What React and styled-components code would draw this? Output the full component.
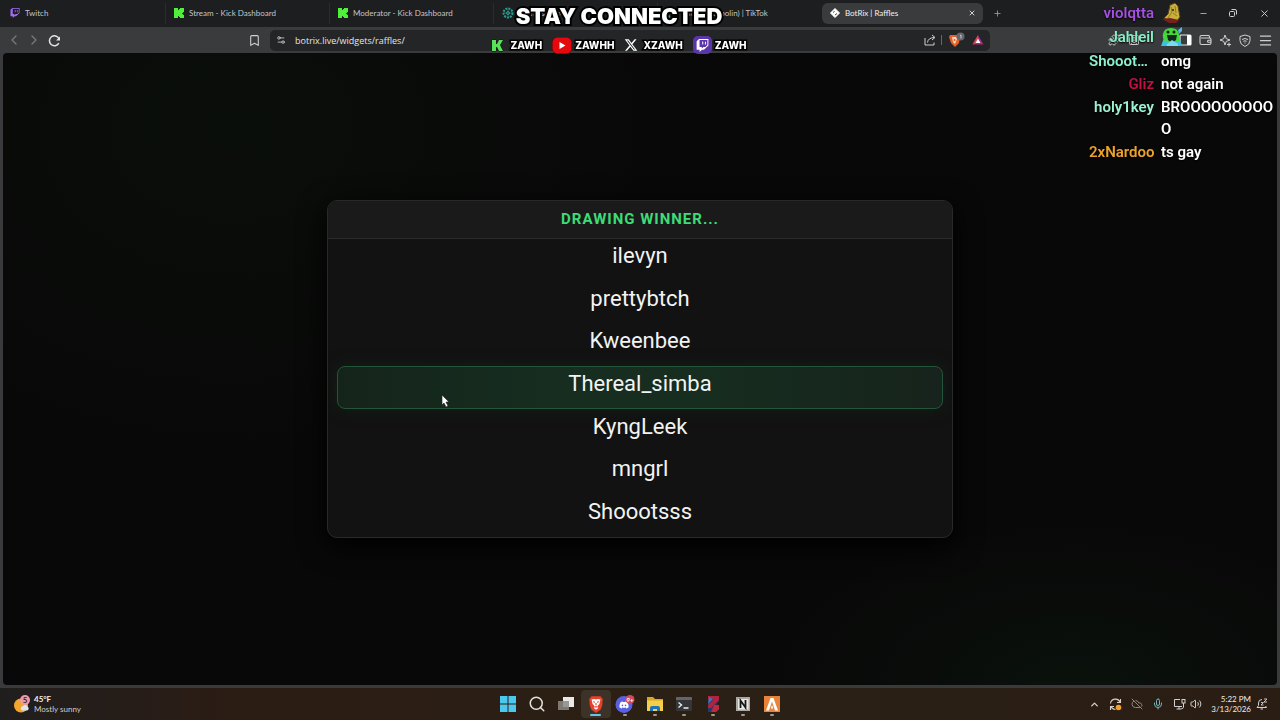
import styled, { createGlobalStyle, css } from "styled-components";
import {
  Bookmark,
  ChevronLeft,
  ChevronRight,
  ChevronUp,
  CloudOff,
  Menu,
  Mic,
  Minus,
  Plus,
  Puzzle,
  Search,
  Settings2,
  SquareUser,
  Volume2,
  X,
} from "lucide-react";
import { FaDiscord, FaTwitch, FaXTwitter } from "react-icons/fa6";

const GlobalStyle = createGlobalStyle`
  * {
    box-sizing: border-box;
  }

  body {
    margin: 0;
    background: #0a0a0a;
    font-family: Lato, "Open Sans", sans-serif;
    color: #e6e6e6;
  }

  button, input {
    font: inherit;
    color: inherit;
    background: none;
    border: 0;
    padding: 0;
    margin: 0;
  }

  svg {
    display: block;
    flex: none;
  }
`;

const Desktop = styled.div`
  display: flex;
  flex-direction: column;
  min-height: 100vh;
  background: #3a3a3c;
  overflow: hidden;
`;

const TabStrip = styled.div`
  display: flex;
  align-items: center;
  height: 27px;
  padding: 0 0 1px 2px;
  background: #1d1e20;
`;

const Tab = styled.div`
  display: flex;
  align-items: center;
  flex: 0 1 164px;
  min-width: 0;
  height: 21px;
  padding: 0 7px 0 8px;
  border-right: 1px solid ${(props) => (props.$last ? "transparent" : "#2b2c2e")};

  ${(props) =>
    props.$active &&
    css`
      flex-basis: 161px;
      border: 0;
      border-radius: 6px;
      background: #3a3b3d;
    `}
`;

const TabButton = styled.button`
  display: flex;
  align-items: center;
  gap: 5px;
  flex: 1;
  min-width: 0;
  font-size: 8px;
  line-height: 12px;
  color: ${(props) => (props.$active ? "#f2f2f2" : "#c4c5c7")};
  white-space: nowrap;
`;

const IconButton = styled.button`
  display: flex;
  align-items: center;
  justify-content: center;
  width: ${(props) => props.$width || 20}px;
  height: 20px;
  color: ${(props) => props.$color || "#d0d0d2"};
`;

const WindowControls = styled.div`
  display: flex;
  margin-left: auto;
`;

const Toolbar = styled.div`
  display: flex;
  align-items: center;
  height: 26px;
  padding: 0 5px 0 4px;
  background: #3a3b3d;
`;

const ToolbarStart = styled.div`
  flex: 1 1 266px;
  display: flex;
  padding-right: 6px;
`;

const ToolbarEnd = styled.div`
  flex: 1 1 285px;
  display: flex;
  justify-content: flex-end;
  gap: 31px;
`;

const ToolGroup = styled.div`
  display: flex;
`;

const BookmarkSlot = styled.div`
  margin-left: auto;
`;

const AddressBar = styled.div`
  display: flex;
  align-items: center;
  flex: 0 1 720px;
  height: 21px;
  padding: 0 4px 0 1px;
  border-radius: 5px;
  background: #242527;
`;

const AddressInput = styled.input`
  flex: 1;
  min-width: 0;
  padding-left: 4px;
  font-family: "Open Sans", sans-serif;
  font-size: 9px;
  outline: none;
`;

const Divider = styled.span`
  width: 1px;
  height: 10px;
  background: #65666a;
`;

const Viewport = styled.main`
  flex: 1;
  display: flex;
  align-items: center;
  justify-content: center;
  margin: 0 3px 3px;
  padding: 20px;
  border-radius: 4px;
  background:
    radial-gradient(ellipse 420px 320px at 18% 12%, #0a0e0a 0%, transparent 100%),
    radial-gradient(ellipse 300px 160px at 84% 100%, #0a110b 0%, transparent 100%),
    #080808;
`;

const Card = styled.section`
  width: 100%;
  max-width: 626px;
  border: 1px solid #29292a;
  border-radius: 10px;
  background: #121212;
  box-shadow: 0 8px 28px #000000;
  overflow: hidden;
`;

const CardTitle = styled.h1`
  margin: 0;
  padding: 8px 0 9px;
  border-bottom: 1px solid #2c2b2c;
  background: #1a1a1a;
  font-family: Roboto, sans-serif;
  font-size: 15px;
  font-weight: 700;
  line-height: 20px;
  letter-spacing: 1px;
  text-align: center;
  text-transform: uppercase;
  color: #3ddc76;
`;

const Drum = styled.div`
  position: relative;
  height: 298px;
`;

const Marker = styled.div`
  position: absolute;
  left: 9px;
  right: 9px;
  top: 127px;
  height: 43px;
  border: 1px solid #24553a;
  border-radius: 8px;
  background: linear-gradient(90deg, #15241b, #162d1f 35%, #162d1f 60%, #17231c);
  box-shadow: 0 0 16px #10301c80;
`;

const Reel = styled.ol`
  position: absolute;
  inset: -4px 0 4px;
  display: grid;
  grid-template-rows: repeat(7, 1fr);
  margin: 0;
  padding: 0;
  list-style: none;
`;

const Entrant = styled.li`
  display: flex;
  align-items: center;
  justify-content: center;
  font-family: Roboto, sans-serif;
  font-size: 22px;
  line-height: 28px;
  color: #f2f3f2;
`;

const Taskbar = styled.footer`
  display: grid;
  grid-template-columns: 1fr 294px 1fr;
  align-items: center;
  height: 32px;
  background: linear-gradient(90deg, #201e1d, #2b1c14 18%, #2b2014 50%, #2a1e14);
`;

const Weather = styled.button`
  display: flex;
  align-items: center;
  gap: 3px;
  justify-self: start;
  padding-left: 13px;
  font-size: 8px;
  line-height: 10px;
  text-align: left;
  color: #d0cccb;

  strong {
    display: block;
    font-weight: 700;
    color: #f0efee;
  }
`;

const Apps = styled.nav`
  display: grid;
  grid-template-columns: repeat(10, 1fr);
`;

const AppButton = styled.button`
  display: flex;
  flex-direction: column;
  align-items: center;
  gap: 1px;
  height: 28px;
  padding-top: 5px;
  border-radius: 4px;
  background: ${(props) => (props.$state === "active" ? "#3c3228" : "none")};

  &::after {
    content: "";
    width: ${(props) => (props.$state === "active" ? 11 : 4)}px;
    height: 2px;
    border-radius: 1px;
    background: ${(props) => (props.$state === "active" ? "#62c5e8" : "#a0978c")};
    visibility: ${(props) => (props.$state ? "visible" : "hidden")};
  }
`;

const Tray = styled.div`
  display: flex;
  align-items: center;
  justify-content: flex-end;
  padding-right: 10px;
`;

const Clock = styled.button`
  padding: 0 3px 0 9px;
  font-size: 8px;
  line-height: 10px;
  text-align: right;
  color: #f0ece8;

  span {
    display: block;
  }
`;

const Banner = styled.aside`
  position: fixed;
  top: 0;
  left: 0;
  right: 42px;
  display: flex;
  flex-direction: column;
  align-items: center;
  pointer-events: none;
  font-family: Inter, sans-serif;
  color: #ffffff;
`;

const BannerTitle = styled.h2`
  margin: 0;
  font-size: 22px;
  font-weight: 900;
  line-height: 32px;
  -webkit-text-stroke: 4px #000000;
  paint-order: stroke fill;
  white-space: nowrap;
`;

const Socials = styled.ul`
  display: flex;
  align-items: center;
  gap: 10px;
  margin: 0;
  padding: 0;
  list-style: none;
`;

const Social = styled.li`
  display: flex;
  align-items: center;
  gap: ${(props) => props.$gap}px;
  height: 26px;
  font-size: 10px;
  font-weight: 800;
  -webkit-text-stroke: 3px #000000;
  paint-order: stroke fill;

  svg {
    -webkit-text-stroke: 0;
  }
`;

const TwitchBadge = styled.span`
  display: flex;
  align-items: center;
  justify-content: center;
  width: 19px;
  height: 18px;
  border-radius: 5px;
  background: #5b36a8;
`;

const Chat = styled.div`
  position: fixed;
  top: 2px;
  right: 6px;
  display: flex;
  flex-direction: column;
  gap: 1px;
  width: 185px;
  font-family: Roboto, sans-serif;
  font-size: 15px;
  font-weight: 600;
  line-height: 22px;
  pointer-events: none;
`;

const Message = styled.div`
  display: grid;
  grid-template-columns: 65px 1fr;
  column-gap: 7px;
  min-height: ${(props) => (props.$emote ? 23 : 22)}px;
  text-shadow: 0 1px 2px #000000;
`;

const Author = styled.span`
  white-space: nowrap;
  text-align: ${(props) => (props.$short ? "left" : "right")};
  color: ${(props) => props.$color};
`;

const Body = styled.span`
  word-break: break-all;
  color: #ffffff;
`;

const Pointer = styled.svg`
  position: fixed;
  left: 441px;
  top: 394px;
  pointer-events: none;
`;

function KickIcon() {
  return (
    <svg width="10" height="10" viewBox="0 0 10 10" fill="#4ff03a">
      <path d="M0 0h4v2h1V1h1V0h4v4H9v1H8v1h1v1h1v3H6V9H5V8H4v2H0z" />
    </svg>
  );
}

function KickLetterIcon() {
  return (
    <svg width="13" height="13" viewBox="0 0 13 13">
      <path
        d="M1 1h4v4h1l2-4h4L9 6l3 6H8L6 8H5v4H1z"
        fill="#5ae05a"
        stroke="#0b1a0b"
        strokeWidth="1"
        paintOrder="stroke"
      />
    </svg>
  );
}

function AtomIcon() {
  return (
    <svg width="12" height="12" viewBox="0 0 12 12" fill="none" stroke="#2a9d92">
      <circle cx="6" cy="6" r="4.5" strokeDasharray="2 1" strokeWidth="2" />
      <circle cx="6" cy="6" r="1.5" />
      <path d="M2 6h8M6 2v8" strokeWidth="0.6" />
    </svg>
  );
}

function BotrixIcon() {
  return (
    <svg width="10" height="10" viewBox="0 0 10 10">
      <path d="M5 0.5l4.500 4.500L5 9.500 0.500 5z" fill="#fff" stroke="#fff" strokeLinejoin="round" />
      <path d="M3 4.500l1.500-1M5 7l2-1.500" stroke="#333" strokeWidth="0.9" />
    </svg>
  );
}

function RestoreIcon() {
  return (
    <svg width="8" height="8" viewBox="0 0 8 8" fill="none" stroke="currentColor">
      <rect x="0.5" y="2.5" width="5" height="5" rx="1" />
      <path d="M2.500 0.500H6q1.500 0 1.500 1.500v3.500" />
    </svg>
  );
}

function ReloadIcon() {
  return (
    <svg width="13" height="13" viewBox="0 0 13 13" fill="none" stroke="#e4e4e6" strokeWidth="1.5">
      <path d="M10.800 9.200A5 5 0 1 1 11 4.800" />
      <path d="M12 2.500V6.500H8z" fill="#e4e4e6" stroke="none" />
    </svg>
  );
}

function ShareIcon() {
  return (
    <svg width="12" height="12" viewBox="0 0 12 12" fill="none" stroke="currentColor">
      <path d="M1 4v7h9V8.500" />
      <path d="M3.500 8.500Q4 4 10 3.500M8 1l3 2.500-3 2.500" />
    </svg>
  );
}

function SidebarIcon() {
  return (
    <svg width="13" height="12" viewBox="0 0 13 12">
      <rect x="1" y="1" width="11" height="10" rx="1" fill="none" stroke="#e8e8ea" strokeWidth="1.2" />
      <path d="M8 1h4v10H8z" fill="#fff" />
    </svg>
  );
}

function WalletIcon() {
  return (
    <svg width="13" height="12" viewBox="0 0 13 12" fill="none" stroke="currentColor" strokeWidth="1.1">
      <path d="M10.500 4V2.500q0-1-1-1h-7Q1 1.500 1 3v6q0 1.500 1.500 1.500h8q1.500 0 1.500-1.500V5.500Q12 4 10.500 4H2" />
      <path d="M12 6.200H9.500q-1 0-1 1t1 1H12" />
    </svg>
  );
}

function SparkIcon() {
  return (
    <svg width="13" height="13" viewBox="0 0 13 13" fill="none" stroke="currentColor">
      <path d="M6 1l1.300 3.700L11 6 7.300 7.300 6 11 4.700 7.300 1 6l3.700-1.300z" strokeLinejoin="round" />
      <path d="M10 8.500v4M8 10.500h4" />
    </svg>
  );
}

function VpnIcon() {
  return (
    <svg width="12" height="13" viewBox="0 0 12 13" fill="none" stroke="currentColor">
      <path d="M6 1l5 1.500v4q0 4-5 6-5-2-5-6v-4z" strokeLinejoin="round" />
      <path d="M3 5.500q3-2 6 0M4.300 7.300q1.700-1 3.400 0M6 8.500v1" />
    </svg>
  );
}

function YoutubeIcon() {
  return (
    <svg width="20" height="17" viewBox="0 0 20 17">
      <rect x="0.5" y="0.5" width="19" height="16" rx="5" fill="#e4090f" stroke="#4a0505" />
      <path d="M7.500 5l6 3.500-6 3.500z" fill="#fff" />
    </svg>
  );
}

function BraveIcon() {
  return (
    <svg width="18" height="18" viewBox="0 0 16 16">
      <path d="M4 1h8l2 2.500-.5 6L12 13l-4 3-4-3-1.500-3.500-.5-6z" fill="#e8402a" />
      <path d="M4 4l2.500-.5L8 4l1.500-.5L12 4l-1 4-1.500 1.500.5 2L8 13l-2-1.500.5-2L5 8z" fill="#fff" />
      <path d="M5.500 6l1.500.5M10.500 6L9 6.500M8 7v2M6.500 10.500h3" stroke="#e8402a" />
    </svg>
  );
}

function BraveShieldIcon() {
  return (
    <svg width="17" height="16" viewBox="0 0 17 16">
      <path d="M2 3h8l2 2-1 6-4 4-4-4L1 5z" fill="#e8602c" />
      <path d="M4 5h4l1 2-2 5-2-2z" fill="#fbe2c4" />
      <path d="M5.500 7l2 1-2 1" fill="none" stroke="#e8602c" />
      <circle cx="12.500" cy="4.500" r="4" fill="#66676e" />
      <path d="M12 3.500l1-.5v3.500" fill="none" stroke="#ddd" strokeWidth="0.8" />
    </svg>
  );
}

function BatIcon() {
  return (
    <svg width="12" height="12" viewBox="0 0 12 12">
      <path d="M6 1L0.500 10.500h11z" fill="#a62a7d" />
      <path d="M6 1L0.500 10.500 6 8z" fill="#e0443c" />
      <path d="M6 4.500L3.500 9h5z" fill="#fff" />
    </svg>
  );
}

function WeatherIcon() {
  return (
    <svg width="18" height="20" viewBox="0 0 18 20">
      <circle cx="8" cy="11.500" r="7" fill="#f5a52d" />
      <path d="M8 15.500a2.500 2.500 0 0 1 2-3.500 3 3 0 0 1 5 1 2 2 0 0 1-1 3.500H9z" fill="#dbe6f5" />
      <circle cx="12" cy="6" r="5" fill="#ef9aa4" />
      <text x="12" y="9" fontSize="8" fontWeight="700" textAnchor="middle" fill="#40232a">
        5
      </text>
    </svg>
  );
}

function WindowsIcon() {
  return (
    <svg width="18" height="18" viewBox="0 0 18 18" fill="#4cc8ee">
      <path d="M1 1h7.500v7.500H1zM9.500 1H17v7.500H9.500zM1 9.500h7.500V17H1zM9.500 9.500H17V17H9.500z" />
    </svg>
  );
}

function TaskViewIcon() {
  return (
    <svg width="18" height="18" viewBox="0 0 18 18">
      <rect x="6" y="2" width="11" height="10" fill="#e8e8e8" />
      <rect x="1" y="6" width="11" height="9" fill="#8b8986" fillOpacity="0.85" />
    </svg>
  );
}

function DiscordIcon() {
  return (
    <svg width="20" height="18" viewBox="0 0 20 18">
      <circle cx="9" cy="9.500" r="8.500" fill="#5a60e0" />
      <FaDiscord x="4" y="5" size={10} color="#fff" />
      <circle cx="15" cy="4.500" r="4.500" fill="#d44a59" />
      <text x="15" y="7" fontSize="6" fontWeight="700" textAnchor="middle" fill="#fff">
        9+
      </text>
    </svg>
  );
}

function FolderIcon() {
  return (
    <svg width="18" height="18" viewBox="0 0 18 18">
      <path d="M1 2h6l2 2h8v12H1z" fill="#d9a62a" />
      <path d="M1 5.500h16V16H1z" fill="#f6cf4a" />
      <path d="M4 16v-3q0-2 2-2h6q2 0 2 2v3h-3v-2H7v2z" fill="#2274b8" />
    </svg>
  );
}

function TerminalIcon() {
  return (
    <svg width="18" height="18" viewBox="0 0 18 18">
      <rect x="1" y="2" width="16" height="14" rx="1" fill="#343638" />
      <path d="M1 3q0-1 1-1h14q1 0 1 1v2H1z" fill="#63656a" />
      <path d="M3.500 7.500L6.500 10l-3 2.500M8.500 13h5" fill="none" stroke="#eee" strokeWidth="1.400" />
    </svg>
  );
}

function RedBlueIcon() {
  return (
    <svg width="18" height="18" viewBox="0 0 18 18">
      <path d="M4 1h11v5l-3 3 3 3v3l-3 2H4z" fill="#26396e" />
      <path d="M15 1v4L7 13H4v-3l6-6H4V1z" fill="#b3223f" />
      <path d="M10 10h5v4l-3 3H7z" fill="#c02a3f" />
      <path d="M5 2l4 2-5 5z" fill="#4a72b4" />
    </svg>
  );
}

function NotionIcon() {
  return (
    <svg width="18" height="18" viewBox="0 0 18 18">
      <rect x="2" y="2" width="14" height="14" fill="#aaa9a4" />
      <rect x="4" y="4" width="10.500" height="10.500" fill="#e8e8e3" />
      <path d="M6.500 13V5.500l5 7V5" fill="none" stroke="#161616" strokeWidth="1.800" />
    </svg>
  );
}

function OrangeIcon() {
  return (
    <svg width="18" height="18" viewBox="0 0 18 18">
      <rect x="1" y="1" width="16" height="16" fill="#e8833a" />
      <path d="M3 15.500L7.500 3h3L15 15.500h-3L9 6.500l-3 9z" fill="#fff" />
      <path d="M9 10l1 2.500-1 2-1-2z" fill="#fff" />
    </svg>
  );
}

function UpdateIcon() {
  return (
    <svg width="13" height="13" viewBox="0 0 13 13" fill="none" stroke="#d8d0c8" strokeWidth="1.1">
      <path d="M1.500 5.500A5 5 0 0 1 11 4M11.500 1v3.500H8M1.500 12V8.500H5M2 8.500q1.500 3 4.500 3" />
      <circle cx="9.500" cy="9.500" r="2.800" fill="#f0a030" stroke="none" />
    </svg>
  );
}

function NetworkIcon() {
  return (
    <svg width="13" height="12" viewBox="0 0 13 12" fill="none" stroke="currentColor">
      <path d="M7 1.500H1.500v7H9M3.500 11h5M6 8.500V11M10.500 5v4.500q0 1-2 1" />
      <rect x="9" y="1.500" width="3" height="3.500" />
    </svg>
  );
}

function BellSnoozeIcon() {
  return (
    <svg width="12" height="12" viewBox="0 0 12 12" fill="none" stroke="currentColor">
      <path d="M6 1.500Q2.500 1.500 2.500 5v2.500L1 9.500h9.500L9.500 8M4.500 11h2.500" />
      <path d="M8 1h3L8 4h3M5 4.500h2.500L5 7h2.500" strokeWidth="0.9" />
    </svg>
  );
}

function BananaEmote() {
  return (
    <svg width="22" height="21" viewBox="0 0 22 21">
      <path d="M9 3l5-2 3 3 2 11-3 4-9-1-4-2 4-4z" fill="#c9ae3c" stroke="#4e4216" />
      <path d="M10 5l1 5-4 6M14 4l1 7M12 11l4 3" fill="none" stroke="#8e7a24" />
      <path d="M1 17l8-1 9 2-3 3H8z" fill="#74231c" />
      <circle cx="12" cy="8" r="1" fill="#2c2410" />
    </svg>
  );
}

function SlimeEmote() {
  return (
    <svg width="22" height="22" viewBox="0 0 22 22">
      <path d="M0 20l3-8 7-2 9 3 2 7z" fill="#3fc0e0" />
      <path d="M2 8q1-6 8-6 7 0 8 6v7q-7 4-14 0-3-3-2-7z" fill="#45d83a" />
      <path d="M6 9h10l-1 5q-4 4-8 0z" fill="#142b1c" />
      <circle cx="7" cy="6" r="1.500" fill="#10200f" />
      <circle cx="13" cy="6" r="1.500" fill="#10200f" />
      <path d="M6 18l5-4 6 4v2H6z" fill="#78daf0" />
      <path d="M17 4l4-3v4l-3 3z" fill="#5ab8e8" />
    </svg>
  );
}

const TABS = [
  { title: "Twitch", icon: <FaTwitch size={10} color="#a26cf5" /> },
  { title: "Stream - Kick Dashboard", icon: <KickIcon /> },
  { title: "Moderator - Kick Dashboard", icon: <KickIcon /> },
  { title: "Raffle setup", icon: <AtomIcon /> },
  { title: "zawh (@zboolin) | TikTok", icon: <AtomIcon /> },
  { title: "BotRix | Raffles", icon: <BotrixIcon />, active: true },
];

const ENTRANTS = ["ilevyn", "prettybtch", "Kweenbee", "Thereal_simba", "KyngLeek", "mngrl", "Shoootsss"];

const APPS = [
  { name: "Start", icon: <WindowsIcon /> },
  { name: "Search", icon: <Search size={18} color="#e4e0dc" /> },
  { name: "Task view", icon: <TaskViewIcon /> },
  { name: "Brave", icon: <BraveIcon />, state: "active" },
  { name: "Discord", icon: <DiscordIcon />, state: "open" },
  { name: "File Explorer", icon: <FolderIcon />, state: "open" },
  { name: "Terminal", icon: <TerminalIcon />, state: "open" },
  { name: "Editor", icon: <RedBlueIcon />, state: "open" },
  { name: "Notion", icon: <NotionIcon />, state: "open" },
  { name: "Studio", icon: <OrangeIcon />, state: "open" },
];

const MESSAGES = [
  { author: "violqtta", color: "#a64fe0", emote: <BananaEmote /> },
  { author: "Jahleil", color: "#86efc8", emote: <SlimeEmote /> },
  { author: "Shooot…", color: "#8df0cf", text: "omg", short: true },
  { author: "Gliz", color: "#c20f45", text: "not again" },
  { author: "holy1key", color: "#9af2d2", text: "BROOOOOOOOOO" },
  { author: "2xNardoo", color: "#eda22c", text: "ts gay" },
];

const SOCIALS = [
  { handle: "ZAWH", icon: <KickLetterIcon />, gap: 6 },
  { handle: "ZAWHH", icon: <YoutubeIcon />, gap: 3 },
  { handle: "XZAWH", icon: <FaXTwitter size={14} />, gap: 5 },
  {
    handle: "ZAWH",
    icon: (
      <TwitchBadge>
        <FaTwitch size={13} />
      </TwitchBadge>
    ),
    gap: 3,
  },
];

function Browser() {
  return (
    <>
      <TabStrip>
        {TABS.map((tab, index) => (
          <Tab key={tab.title} $active={tab.active} $last={index === 4}>
            <TabButton $active={tab.active}>
              {tab.icon}
              {tab.title}
            </TabButton>
            {tab.active && (
              <IconButton aria-label="Close tab" $width={8}>
                <X size={8} strokeWidth={3} />
              </IconButton>
            )}
          </Tab>
        ))}
        <IconButton aria-label="New tab" $width={28} $color="#a8a9ab">
          <Plus size={9} />
        </IconButton>
        <WindowControls>
          <IconButton aria-label="Minimize" $width={30}>
            <Minus size={9} />
          </IconButton>
          <IconButton aria-label="Restore" $width={30}>
            <RestoreIcon />
          </IconButton>
          <IconButton aria-label="Close" $width={32}>
            <X size={11} />
          </IconButton>
        </WindowControls>
      </TabStrip>
      <Toolbar>
        <ToolbarStart>
          <IconButton aria-label="Back" $color="#77787b">
            <ChevronLeft size={16} strokeWidth={2} />
          </IconButton>
          <IconButton aria-label="Forward" $color="#77787b">
            <ChevronRight size={16} strokeWidth={2} />
          </IconButton>
          <IconButton aria-label="Reload">
            <ReloadIcon />
          </IconButton>
          <BookmarkSlot>
            <IconButton aria-label="Bookmark">
              <Bookmark size={13} />
            </IconButton>
          </BookmarkSlot>
        </ToolbarStart>
        <AddressBar>
          <IconButton aria-label="Site settings">
            <Settings2 size={10} />
          </IconButton>
          <AddressInput aria-label="Address" defaultValue="botrix.live/widgets/raffles/" />
          <IconButton aria-label="Share" $width={22}>
            <ShareIcon />
          </IconButton>
          <Divider />
          <IconButton aria-label="Shields" $width={28}>
            <BraveShieldIcon />
          </IconButton>
          <IconButton aria-label="Rewards" $width={16}>
            <BatIcon />
          </IconButton>
        </AddressBar>
        <ToolbarEnd>
          <ToolGroup>
            <IconButton aria-label="Extensions">
              <Puzzle size={12} />
            </IconButton>
            <IconButton aria-label="Profile">
              <SquareUser size={12} />
            </IconButton>
          </ToolGroup>
          <ToolGroup>
            <IconButton aria-label="Sidebar">
              <SidebarIcon />
            </IconButton>
            <IconButton aria-label="Wallet">
              <WalletIcon />
            </IconButton>
            <IconButton aria-label="Leo">
              <SparkIcon />
            </IconButton>
            <IconButton aria-label="VPN">
              <VpnIcon />
            </IconButton>
            <IconButton aria-label="Menu">
              <Menu size={15} />
            </IconButton>
          </ToolGroup>
        </ToolbarEnd>
      </Toolbar>
    </>
  );
}

function Raffle() {
  return (
    <Card>
      <CardTitle>Drawing winner...</CardTitle>
      <Drum>
        <Marker />
        <Reel>
          {ENTRANTS.map((name) => (
            <Entrant key={name}>{name}</Entrant>
          ))}
        </Reel>
      </Drum>
    </Card>
  );
}

function SystemBar() {
  return (
    <Taskbar>
      <Weather>
        <WeatherIcon />
        <span>
          <strong>45°F</strong>
          Mostly sunny
        </span>
      </Weather>
      <Apps>
        {APPS.map((app) => (
          <AppButton key={app.name} aria-label={app.name} $state={app.state}>
            {app.icon}
          </AppButton>
        ))}
      </Apps>
      <Tray>
        <IconButton aria-label="Show hidden icons">
          <ChevronUp size={11} strokeWidth={3} />
        </IconButton>
        <IconButton aria-label="Updates" $width={22}>
          <UpdateIcon />
        </IconButton>
        <IconButton aria-label="OneDrive" $width={22} $color="#8d8782">
          <CloudOff size={12} />
        </IconButton>
        <IconButton aria-label="Microphone" $color="#6fb6c0">
          <Mic size={12} />
        </IconButton>
        <IconButton aria-label="Network" $width={22}>
          <NetworkIcon />
        </IconButton>
        <IconButton aria-label="Volume" $width={12}>
          <Volume2 size={12} />
        </IconButton>
        <Clock>
          <span>5:22 PM</span>
          <span>3/13/2026</span>
        </Clock>
        <IconButton aria-label="Notifications" $width={16}>
          <BellSnoozeIcon />
        </IconButton>
      </Tray>
    </Taskbar>
  );
}

export default function App() {
  return (
    <>
      <GlobalStyle />
      <Desktop>
        <Browser />
        <Viewport>
          <Raffle />
        </Viewport>
        <SystemBar />
      </Desktop>
      <Banner>
        <BannerTitle>STAY CONNECTED</BannerTitle>
        <Socials>
          {SOCIALS.map((social, index) => (
            <Social key={index} $gap={social.gap}>
              {social.icon}
              {social.handle}
            </Social>
          ))}
        </Socials>
      </Banner>
      <Chat>
        {MESSAGES.map((message) => (
          <Message key={message.author} $emote={Boolean(message.emote)}>
            <Author $color={message.color} $short={message.short}>
              {message.author}
            </Author>
            <Body>{message.emote || message.text}</Body>
          </Message>
        ))}
      </Chat>
      <Pointer width="9" height="14" viewBox="0 0 9 14">
        <path d="M1 1v10l2-2 2 4 2-1-2-4h3z" fill="#fff" stroke="#222" strokeWidth="0.600" />
      </Pointer>
    </>
  );
}
